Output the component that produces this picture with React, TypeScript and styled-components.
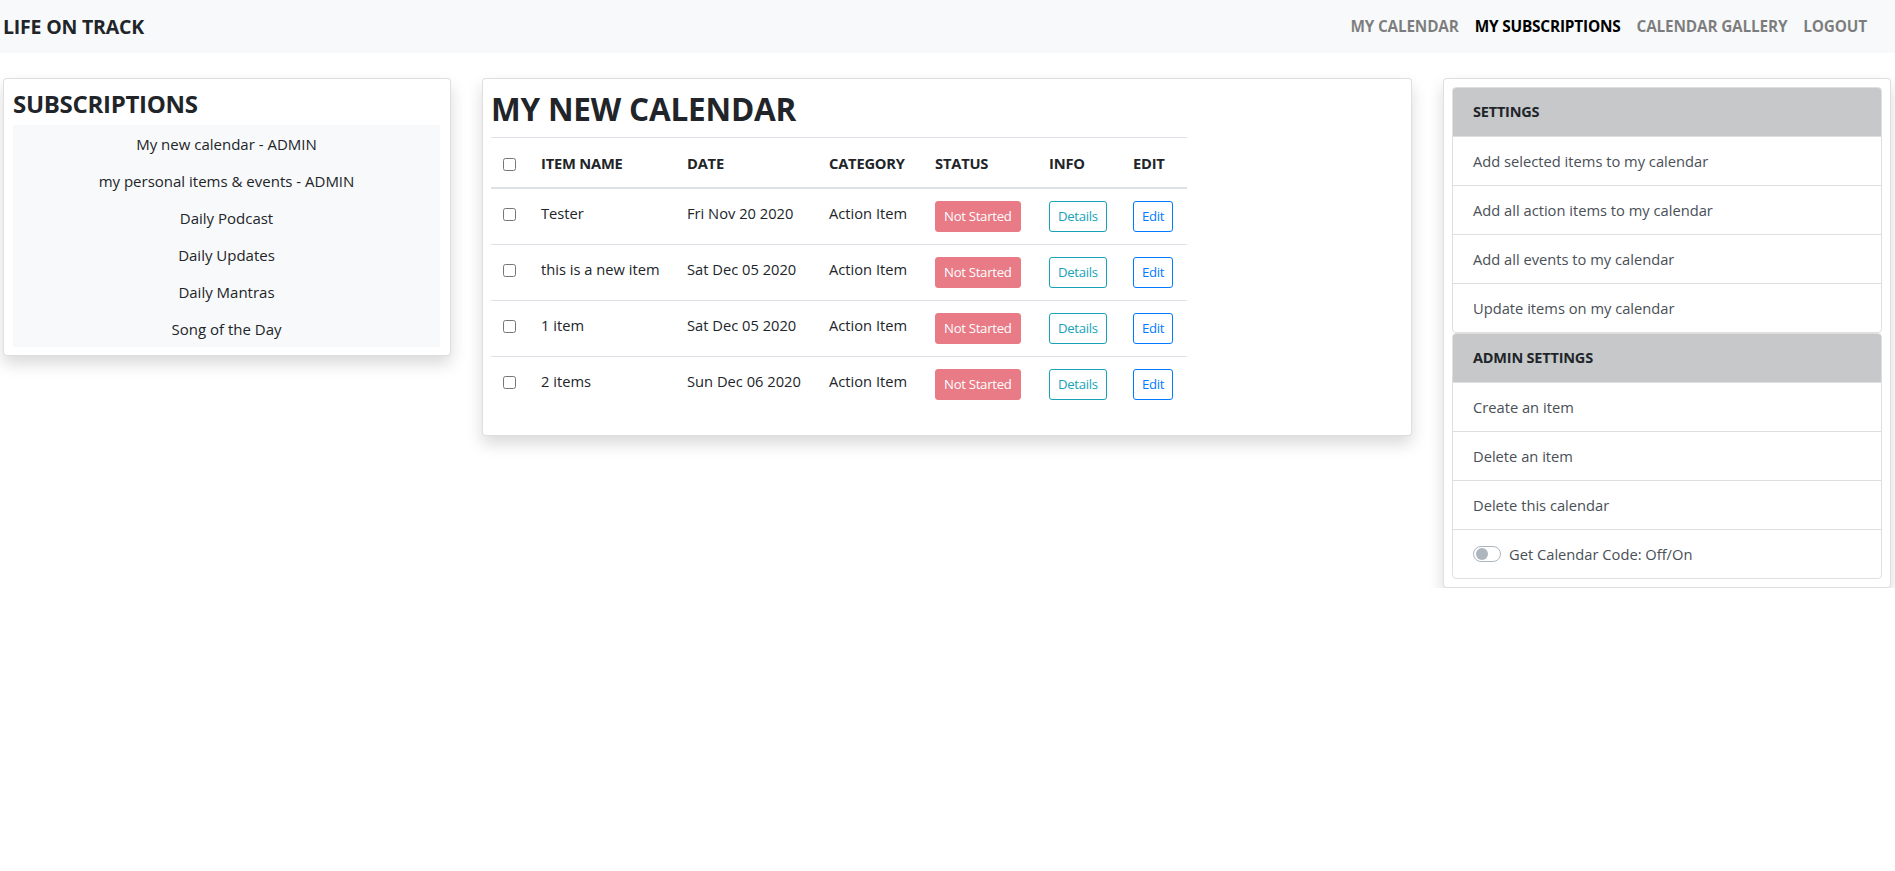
import React from "react";
import styled, { createGlobalStyle } from "styled-components";

const GlobalStyle = createGlobalStyle`
  *, *::before, *::after { box-sizing: border-box; }
  body {
    margin: 0;
    font-family: "Open Sans", "Noto Sans", sans-serif;
    font-size: 16px;
    line-height: 24px;
    color: #212529;
    background: #ffffff;
  }
`;

const Navbar = styled.nav`
  height: 53px;
  background: #f8f9fa;
  display: flex;
  align-items: center;
  justify-content: space-between;
  padding: 0 20px 0 3px;
`;

const Brand = styled.div`
  font-size: 19.5px;
  font-weight: 700;
  color: #212529;
  letter-spacing: -0.2px;
`;

const NavLinks = styled.div`
  display: flex;
  align-items: center;
`;

const NavLink = styled.a<{ $active?: boolean }>`
  padding: 0 8px;
  font-size: 15.4px;
  font-weight: 700;
  color: ${(p) => (p.$active ? "#000000" : "rgba(0,0,0,.5)")};
  text-decoration: none;
  letter-spacing: -0.2px;
`;

const Main = styled.main`
  display: grid;
  grid-template-columns: 448px 930px 448px;
  justify-content: space-between;
  align-items: start;
  padding: 25px 4px 0 3px;
`;

const Card = styled.section<{ $pad: string }>`
  background: #ffffff;
  border: 1px solid rgba(0, 0, 0, 0.125);
  border-radius: 4px;
  box-shadow: 0 8px 16px rgba(0, 0, 0, 0.15);
  padding: ${(p) => p.$pad};
`;

const SubsTitle = styled.h3`
  margin: 0 0 6px;
  font-size: 24px;
  line-height: 31px;
  font-weight: 700;
  letter-spacing: -0.3px;
`;

const SubsList = styled.ul`
  list-style: none;
  margin: 0;
  padding: 0;
  background: #f8f9fa;
`;

const SubsItem = styled.li`
  text-align: center;
  padding: 6.5px 0;
  font-size: 15px;
  color: #212529;
`;

const CalTitle = styled.h2`
  margin: 0 0 8px;
  font-size: 31.5px;
  line-height: 41px;
  font-weight: 700;
  letter-spacing: -0.2px;
`;

const Table = styled.table`
  border-collapse: collapse;
  table-layout: fixed;
  width: 696px;
  margin-bottom: 16px;
  font-size: 14.7px;
`;

const Th = styled.th`
  padding: 13px 12px 12px;
  text-align: left;
  vertical-align: bottom;
  font-weight: 700;
  border-top: 1px solid #dee2e6;
  border-bottom: 2px solid #dee2e6;
  white-space: nowrap;
  letter-spacing: -0.2px;
`;

const Td = styled.td<{ $first?: boolean }>`
  padding: 12px;
  vertical-align: top;
  border-top: ${(p) => (p.$first ? "none" : "1px solid #dee2e6")};
  white-space: nowrap;
`;

const Check = styled.input.attrs({ type: "checkbox" })`
  margin: 0;
  width: 13px;
  height: 13px;
  vertical-align: middle;
  position: relative;
  top: -1px;
`;

const SmallBtn = styled.span<{ $variant: "danger" | "info" | "primary" }>`
  display: inline-block;
  padding: 4px 8px;
  font-size: 13.2px;
  line-height: 21px;
  border-radius: 3px;
  border: 1px solid
    ${(p) =>
      p.$variant === "danger" ? "#e87b86" : p.$variant === "info" ? "#17a2b8" : "#007bff"};
  background: ${(p) => (p.$variant === "danger" ? "#e87b86" : "transparent")};
  color: ${(p) =>
    p.$variant === "danger" ? "#ffffff" : p.$variant === "info" ? "#17a2b8" : "#007bff"};
  letter-spacing: -0.3px;
`;

const ListGroup = styled.div`
  border: 1px solid rgba(0, 0, 0, 0.125);
  border-radius: 4px;
  overflow: hidden;
`;

const GroupHeader = styled.div`
  background: #c6c8ca;
  padding: 12px 20px;
  font-size: 14.5px;
  font-weight: 700;
  color: #212529;
  letter-spacing: -0.2px;
`;

const GroupItem = styled.div`
  padding: 12px 20px;
  border-top: 1px solid rgba(0, 0, 0, 0.125);
  color: #495057;
  font-size: 14.7px;
  display: flex;
  align-items: center;
`;

const SwitchTrack = styled.span`
  position: relative;
  display: inline-block;
  width: 28px;
  height: 16px;
  border: 1px solid #adb5bd;
  border-radius: 8px;
  background: #ffffff;
  margin-right: 8px;

  &::after {
    content: "";
    position: absolute;
    left: 2px;
    top: 1px;
    width: 12px;
    height: 12px;
    border-radius: 50%;
    background: #adb5bd;
  }
`;

const subscriptions = [
  "My new calendar - ADMIN",
  "my personal items & events - ADMIN",
  "Daily Podcast",
  "Daily Updates",
  "Daily Mantras",
  "Song of the Day",
];

const items = [
  { name: "Tester", date: "Fri Nov 20 2020" },
  { name: "this is a new item", date: "Sat Dec 05 2020" },
  { name: "1 item", date: "Sat Dec 05 2020" },
  { name: "2 items", date: "Sun Dec 06 2020" },
];

const colWidths = [38, 146, 142, 106, 114, 84, 66];

export default function App() {
  return (
    <>
      <GlobalStyle />
      <Navbar>
        <Brand>LIFE ON TRACK</Brand>
        <NavLinks>
          <NavLink>MY CALENDAR</NavLink>
          <NavLink $active>MY SUBSCRIPTIONS</NavLink>
          <NavLink>CALENDAR GALLERY</NavLink>
          <NavLink>LOGOUT</NavLink>
        </NavLinks>
      </Navbar>
      <Main>
        <Card $pad="9px 10px 8px 9px">
          <SubsTitle>SUBSCRIPTIONS</SubsTitle>
          <SubsList>
            {subscriptions.map((s) => (
              <SubsItem key={s}>{s}</SubsItem>
            ))}
          </SubsList>
        </Card>

        <Card $pad="9px 10px 7px 8px">
          <CalTitle>MY NEW CALENDAR</CalTitle>
          <Table>
            <colgroup>
              {colWidths.map((w, i) => (
                <col key={i} style={{ width: w }} />
              ))}
            </colgroup>
            <thead>
              <tr>
                <Th>
                  <Check />
                </Th>
                <Th>ITEM NAME</Th>
                <Th>DATE</Th>
                <Th>CATEGORY</Th>
                <Th>STATUS</Th>
                <Th>INFO</Th>
                <Th>EDIT</Th>
              </tr>
            </thead>
            <tbody>
              {items.map((it, i) => (
                <tr key={i}>
                  <Td $first={i === 0}>
                    <Check />
                  </Td>
                  <Td $first={i === 0}>{it.name}</Td>
                  <Td $first={i === 0}>{it.date}</Td>
                  <Td $first={i === 0}>Action Item</Td>
                  <Td $first={i === 0}>
                    <SmallBtn $variant="danger">Not Started</SmallBtn>
                  </Td>
                  <Td $first={i === 0}>
                    <SmallBtn $variant="info">Details</SmallBtn>
                  </Td>
                  <Td $first={i === 0}>
                    <SmallBtn $variant="primary">Edit</SmallBtn>
                  </Td>
                </tr>
              ))}
            </tbody>
          </Table>
        </Card>

        <Card $pad="8px">
          <ListGroup>
            <GroupHeader>SETTINGS</GroupHeader>
            <GroupItem>Add selected items to my calendar</GroupItem>
            <GroupItem>Add all action items to my calendar</GroupItem>
            <GroupItem>Add all events to my calendar</GroupItem>
            <GroupItem>Update items on my calendar</GroupItem>
          </ListGroup>
          <ListGroup>
            <GroupHeader>ADMIN SETTINGS</GroupHeader>
            <GroupItem>Create an item</GroupItem>
            <GroupItem>Delete an item</GroupItem>
            <GroupItem>Delete this calendar</GroupItem>
            <GroupItem>
              <SwitchTrack />
              Get Calendar Code: Off/On
            </GroupItem>
          </ListGroup>
        </Card>
      </Main>
    </>
  );
}
